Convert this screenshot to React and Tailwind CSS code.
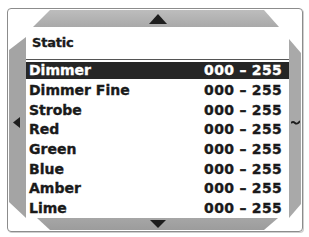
const rows = [
  'Dimmer',
  'Dimmer Fine',
  'Strobe',
  'Red',
  'Green',
  'Blue',
  'Amber',
  'Lime',
];

export default function App() {
  return (
    <div
      className="w-[309px] h-[237px] bg-white overflow-hidden pt-[8px] pl-[7px]"
      style={{ fontFamily: '"DejaVu Sans", Verdana, sans-serif' }}
    >
      <div className="w-[296px] h-[224px] border border-[#8c8c8c] rounded-[4px] p-px grid grid-cols-[17px_263px_12px] grid-rows-[17px_191px_12px] shadow-[1px_1px_0_#cfcfcf]">
        {/* top row */}
        <div />
        <div className="bg-gradient-to-b from-[#bdbdbd] to-[#a9a9a9] [clip-path:polygon(24px_0,238px_0,253px_100%,7px_100%)] flex justify-center items-center">
          <svg width="18" height="10" viewBox="0 0 18 10">
            <path d="M9 0 L18 10 L0 10 Z" fill="#1e1e1e" />
          </svg>
        </div>
        <div />

        {/* middle row */}
        <div className="bg-[#a4a4a4] [clip-path:polygon(0_23px,100%_10px,100%_100%,0_calc(100%-16px))] flex items-center justify-center pr-[3px]">
          <svg width="7" height="11" viewBox="0 0 7 11">
            <path d="M0 5.5 L7 0 L7 11 Z" fill="#1e1e1e" />
          </svg>
        </div>

        <div className="bg-white overflow-hidden flex flex-col [-webkit-text-stroke:0.35px_currentColor]">
          <div className="h-[33px] pl-[6px] flex items-center text-[13px] font-bold text-[#1a1a1a] tracking-[-0.2px]">
            Static
          </div>
          <div className="h-px bg-[#555] mb-px" />
          {rows.map((r, i) => (
            <div key={r} className="h-[19.7px] shrink-0 flex items-center">
              <div
                className={`h-[17.5px] w-full flex items-center justify-between pl-[3px] pr-[7px] text-[14px] font-bold leading-none ${
                  i === 0 ? 'bg-[#262626] text-white' : 'text-[#1a1a1a]'
                }`}
              >
                <span>{r}</span>
                <span className="tracking-[0.3px]">000 – 255</span>
              </div>
            </div>
          ))}
        </div>

        <div className="bg-[#a9a9a9] [clip-path:polygon(0_12px,100%_26px,100%_calc(100%-14px),0_100%)] flex items-center justify-center">
          <svg width="9" height="6" viewBox="0 0 9 6">
            <path d="M0 3 Q2 1 4 3 Q6 5 9 1" stroke="#1e1e1e" strokeWidth="1.8" fill="none" />
          </svg>
        </div>

        {/* bottom row */}
        <div />
        <div className="bg-gradient-to-b from-[#a6a6a6] to-[#9c9c9c] [clip-path:polygon(11px_0,252px_0,238px_100%,24px_100%)] flex justify-center items-center">
          <svg width="16" height="8" viewBox="0 0 16 8">
            <path d="M0 0 L16 0 L8 8 Z" fill="#1e1e1e" />
          </svg>
        </div>
        <div />
      </div>
    </div>
  );
}
